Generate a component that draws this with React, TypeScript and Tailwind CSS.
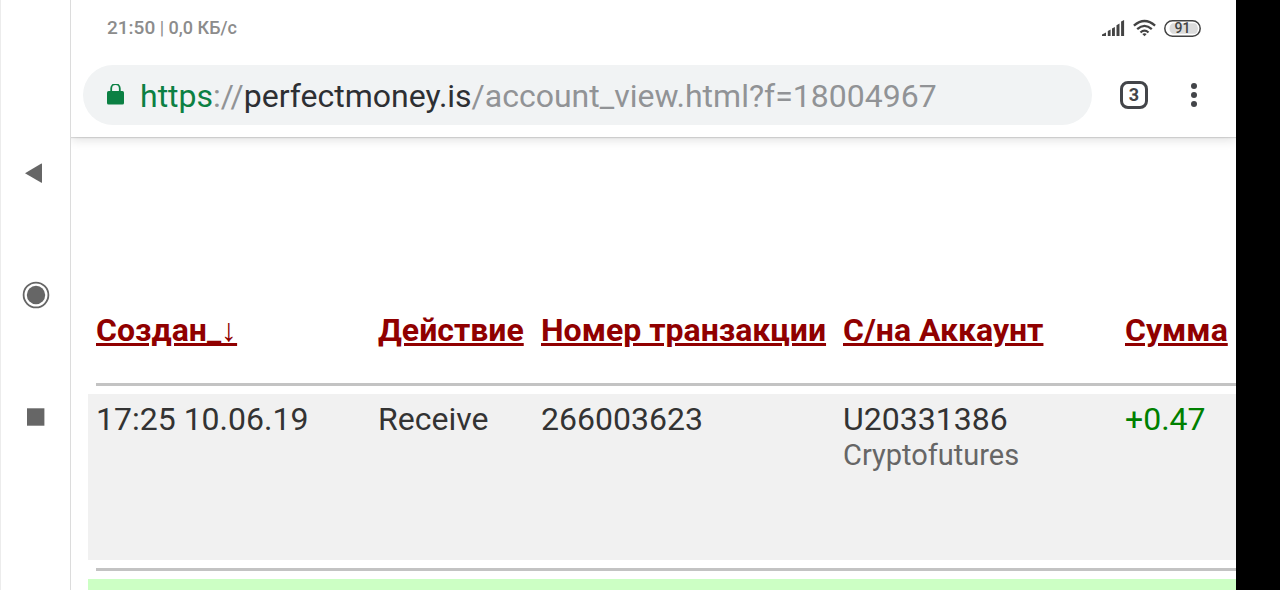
import React, { useState } from 'react';

interface Transaction {
    created: string;
    action: string;
    batch: string;
    account: string;
    accountName: string;
    amount: string;
}

const columns = [
    { label: 'Создан_↓', width: 'w-[282px]' },
    { label: 'Действие', width: 'w-[163px]' },
    { label: 'Номер транзакции', width: 'w-[302px]' },
    { label: 'С/на Аккаунт', width: 'w-[282px]' },
    { label: 'Сумма', width: '' },
];

const transactions: Transaction[] = [
    {
        created: '17:25 10.06.19',
        action: 'Receive',
        batch: '266003623',
        account: 'U20331386',
        accountName: 'Cryptofutures',
        amount: '+0.47',
    },
];

const SystemNav: React.FC = () => (
    <nav className="flex w-[71px] shrink-0 flex-col justify-center border-x border-l-[#ececec] border-r-[#dcdcdc] text-[#666]">
        <button aria-label="Назад" className="flex h-[122px] items-center justify-center">
            <svg width="28" height="28" viewBox="0 0 28 28" fill="currentColor">
                <path d="M3 14.2 19.4 4.6Q20 4.3 20 5V23.4Q20 24 19.4 23.7Z" />
            </svg>
        </button>
        <button aria-label="Домой" className="flex h-[122px] items-center justify-center">
            <svg width="28" height="28" viewBox="0 0 28 28">
                <circle cx="14" cy="14" r="12.4" fill="none" stroke="currentColor" strokeWidth="1.8" />
                <circle cx="14" cy="14" r="9.2" fill="currentColor" />
            </svg>
        </button>
        <button aria-label="Недавние" className="flex h-[122px] items-center justify-center">
            <svg width="28" height="28" viewBox="0 0 28 28" fill="currentColor">
                <rect x="5" y="5.3" width="17.4" height="17.4" />
            </svg>
        </button>
    </nav>
);

const StatusBar: React.FC = () => (
    <div className="flex h-14 items-center justify-between pr-[35px] pl-9 text-[#8c8c8c]">
        <div className="text-lg font-medium">
            <span className="text-[19px]">21:50</span> <span className="font-normal">|</span> 0,0 КБ/с
        </div>
        <div className="flex items-center gap-2 text-[#434343]">
            <svg width="23" height="18" viewBox="0 0 23 18" fill="currentColor">
                <path d="M0 17v-1.6L4 13.600v3.400zM5.800 17v-5L8.600 10.600V17zM10 17V9.400l2.900-1.500V17zM14.500 17V6.300l3-1.700V17zM19.100 17V2.600L22.100 1V17z" />
            </svg>
            <svg width="23" height="18" viewBox="0 0 23 18" fill="none" stroke="currentColor" strokeWidth="2.3">
                <path d="M0.900 6.700Q11.500-2.600 22.100 6.700" />
                <path d="M4.200 10.200Q11.500 3.600 18.800 10.200" />
                <path d="M7.500 13.500Q11.500 9.800 15.500 13.500" />
                <path d="M11.5 17.3 9.3 15.1Q11.5 13.3 13.7 15.1Z" fill="currentColor" stroke="none" />
            </svg>
            <div className="relative flex h-[17px] w-[37px] items-center justify-center text-sm">
                <svg className="absolute inset-0" width="37" height="17" viewBox="0 0 37 17">
                    <rect x="0.8" y="0.8" width="35.4" height="15.4" rx="7.7" fill="none" stroke="currentColor" strokeWidth="1.5" />
                    <path d="M8.5 3.3H31.5Q34 5 34 8.5T31.5 13.7H8.5Q5.5 12 5.5 8.5T8.5 3.3Z" fill="#dcdcdc" />
                </svg>
                <span className="relative font-medium">91</span>
            </div>
        </div>
    </div>
);

const AddressBar: React.FC = () => {
    const [editing, setEditing] = useState(false);
    const [url, setUrl] = useState('https://perfectmoney.is/account_view.html?f=18004967');
    const [, scheme, slashes, host, path] = url.match(/^(\w*)(:\/\/)?([^/]*)(.*)$/) ?? [];

    return (
        <div className="flex h-[60px] min-w-0 flex-1 items-center gap-4 rounded-full bg-[#f1f3f4] px-6 text-[32px]">
            <svg className="shrink-0" width="17" height="22" viewBox="0 0 17 22">
                <path d="M4.2 8V4.400a4.300 4.300 0 0 1 8.600 0V8" fill="none" stroke="#0b8043" strokeWidth="1.8" />
                <rect x="0" y="7" width="17" height="13.500" rx="1.6" fill="#0b8043" />
            </svg>
            {editing ? (
                <input
                    autoFocus
                    aria-label="Адрес"
                    className="min-w-0 flex-1 bg-transparent outline-none"
                    value={url}
                    onChange={(e) => setUrl(e.target.value)}
                    onBlur={() => setEditing(false)}
                />
            ) : (
                <button className="min-w-0 flex-1 truncate pt-0.5 text-left text-[#919396]" onClick={() => setEditing(true)}>
                    <span className="text-[#0b8043]">{scheme}</span>
                    {slashes}
                    <span className="text-[#2d2f33]">{host}</span>
                    {path}
                </button>
            )}
        </div>
    );
};

const Toolbar: React.FC = () => (
    <div className="flex h-[81px] items-center pr-7 pb-1 pl-3">
        <AddressBar />
        <button className="ml-7 flex size-7 items-center justify-center rounded-lg border-[3px] border-[#434549] text-lg font-bold text-[#434549]">
            3
        </button>
        <button aria-label="Меню" className="ml-8 flex h-7 w-7 items-center justify-center text-[#434549]">
            <svg width="6" height="26" viewBox="0 0 6 26" fill="currentColor">
                <circle cx="3" cy="4" r="3" />
                <circle cx="3" cy="13" r="3" />
                <circle cx="3" cy="22" r="3" />
            </svg>
        </button>
    </div>
);

const Divider: React.FC = () => (
    <tr>
        <td colSpan={5} className="py-2 pl-2">
            <hr className="border-t-[3px] border-[#c3c3c3]" />
        </td>
    </tr>
);

const TransactionTable: React.FC = () => (
    <table className="w-full table-fixed text-left text-[32px] leading-9 text-[#333]">
        <thead>
            <tr className="h-[63px] align-top text-[#900000]">
                {columns.map(({ label, width }) => (
                    <th key={label} className={`${width} pl-2 font-bold whitespace-nowrap`}>
                        <a href="#" className="underline">{label}</a>
                    </th>
                ))}
            </tr>
        </thead>
        <tbody>
            <Divider />
            {transactions.map((tx) => (
                <tr key={tx.batch} className="h-[166px] bg-[#f1f1f1] align-top">
                    <td className="pt-[7px] pl-2">{tx.created}</td>
                    <td className="pt-[7px] pl-2">{tx.action}</td>
                    <td className="pt-[7px] pl-2">{tx.batch}</td>
                    <td className="pt-[7px] pl-2">
                        {tx.account}
                        <div className="text-[29px] text-[#666]">{tx.accountName}</div>
                    </td>
                    <td className="pt-[7px] pl-2 text-[#008000]">{tx.amount}</td>
                </tr>
            ))}
            <Divider />
            <tr className="h-[166px] bg-[#ccffc4]">
                <td colSpan={5} />
            </tr>
        </tbody>
    </table>
);

const App: React.FC = () => (
    <div className="flex h-screen overflow-hidden bg-white font-[Roboto,sans-serif]">
        <SystemNav />
        <div className="flex min-w-0 flex-1 flex-col overflow-hidden">
            <header className="z-10 shrink-0 bg-white shadow-[0_1px_1px_rgba(0,0,0,0.12),0_3px_10px_rgba(0,0,0,0.12)]">
                <StatusBar />
                <Toolbar />
            </header>
            <main className="min-h-0 flex-1 overflow-hidden pt-[175px] pl-[17px]">
                <TransactionTable />
            </main>
        </div>
        <div className="w-11 shrink-0 bg-black" />
    </div>
);

export default App;
